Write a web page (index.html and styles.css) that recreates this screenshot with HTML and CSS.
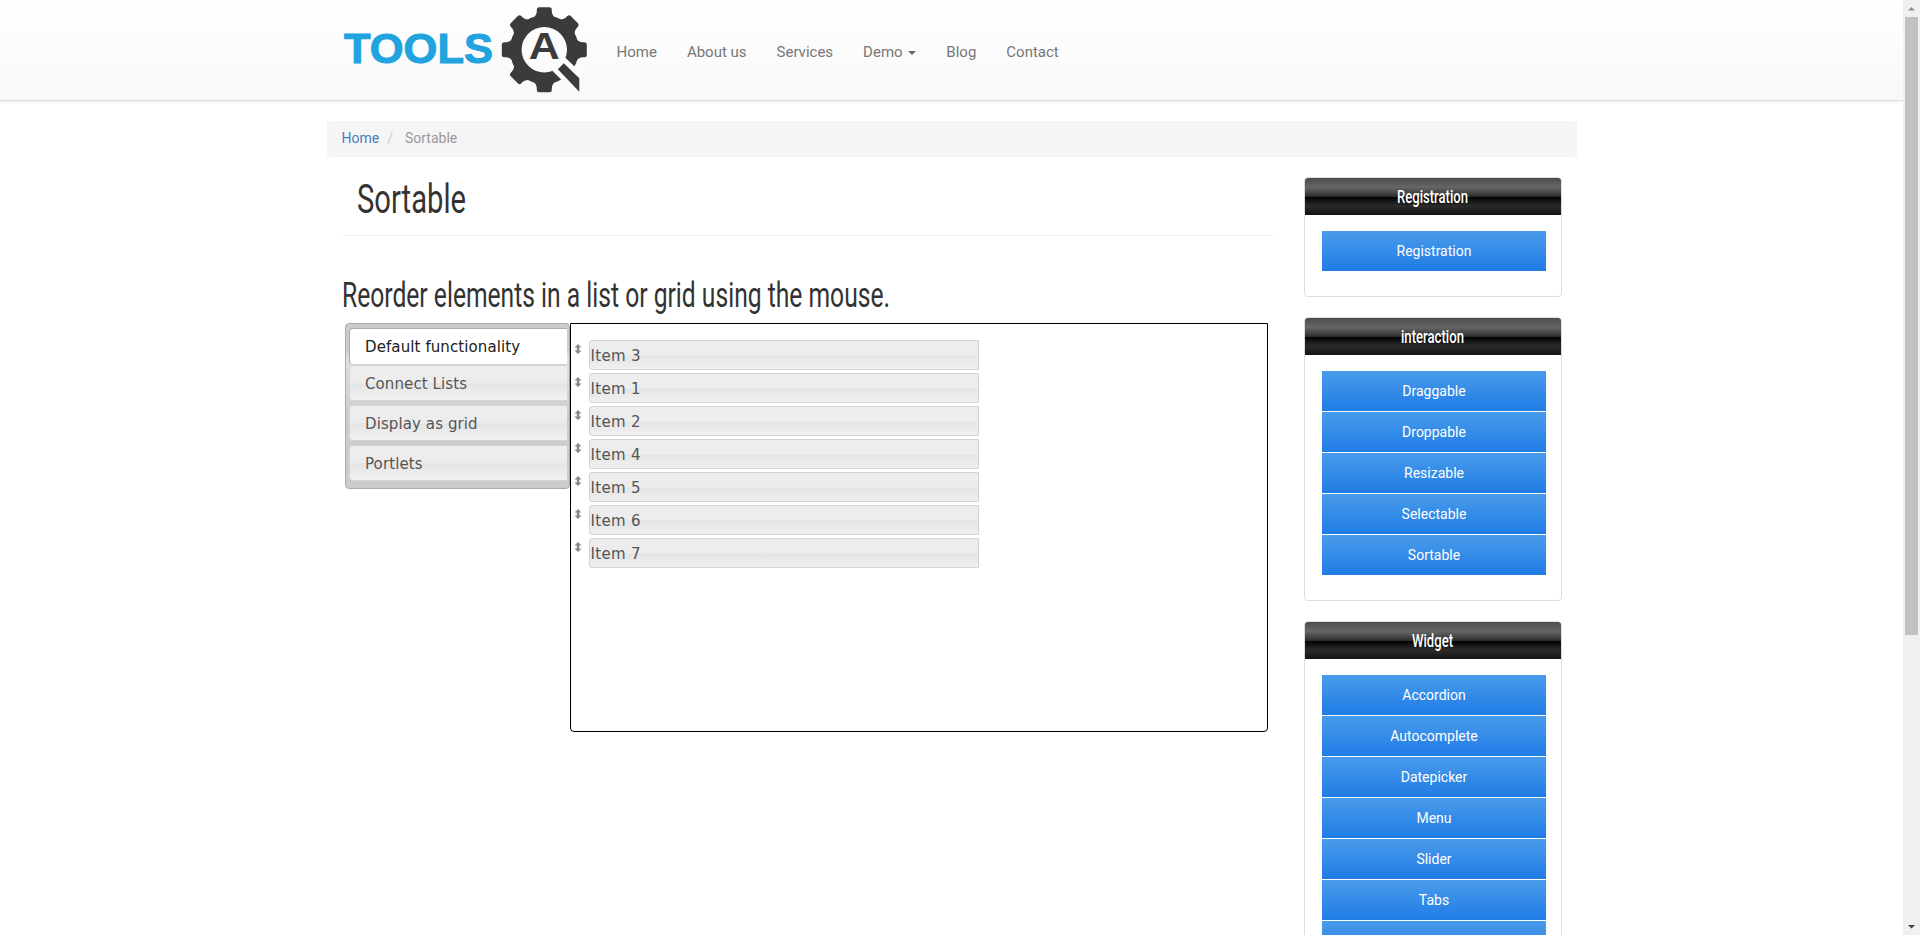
FILE: index.html
```
<!DOCTYPE html>
<html lang="en">
<head>
<meta charset="utf-8">
<title>Sortable</title>
<link rel="stylesheet" href="styles.css">
</head>
<body>
<div class="page">
  <header class="navbar">
    <div class="container nav-row">
      <svg class="logo" width="250" height="100" viewBox="0 0 250 100">
        <text class="logo-text" x="7" y="63" textLength="149" lengthAdjust="spacingAndGlyphs">TOOLS</text>
        <g transform="translate(207.3 49.7)">
          <g class="gear">
            <circle r="34.5"/>
            <path id="tooth" d="M-13-31Q-8-33-7.500-38V-40Q-7.500-42.500-5-42.500H5Q7.500-42.500 7.500-40V-38Q8-33 13-31Z"/>
            <use href="#tooth" transform="rotate(45)"/>
            <use href="#tooth" transform="rotate(90)"/>
            <use href="#tooth" transform="rotate(180)"/>
            <use href="#tooth" transform="rotate(225)"/>
            <use href="#tooth" transform="rotate(270)"/>
            <use href="#tooth" transform="rotate(315)"/>
          </g>
          <circle class="hole" r="22.7"/>
          <path class="hole" d="M8 21L21 8L37 23V42H29Z"/>
          <path class="gear" d="M13.500 19.500L19.500 13.500L35 28.500V42Z"/>
          <text class="logo-a" x="-15.500" y="9.500" textLength="31" lengthAdjust="spacingAndGlyphs">A</text>
        </g>
      </svg>
      <nav class="menu">
        <a>Home</a><a>About us</a><a>Services</a><a>Demo <i class="caret"></i></a><a>Blog</a><a>Contact</a>
      </nav>
    </div>
  </header>
  <div class="container breadcrumb"><a class="link">Home</a><span class="slash">/</span><span class="current">Sortable</span></div>
  <div class="container columns">
    <main class="main">
      <h1 class="title"><svg width="140" height="50"><text x="0" y="36" textLength="109" lengthAdjust="spacingAndGlyphs">Sortable</text></svg></h1>
      <h2 class="subtitle"><svg width="600" height="50"><text x="0" y="35" textLength="548" lengthAdjust="spacingAndGlyphs">Reorder elements in a list or grid using the mouse.</text></svg></h2>
      <div class="demo">
        <ul class="tabs">
          <li class="tab active">Default functionality</li>
          <li class="tab">Connect Lists</li>
          <li class="tab">Display as grid</li>
          <li class="tab">Portlets</li>
        </ul>
        <ul class="panel">
          <li class="row"><svg class="arrow" viewBox="0 0 7 10"><path d="M3.500 0L7 3.500H4.700V6.500H7L3.500 10L0 6.500H2.300V3.500H0Z"/></svg><span class="item">Item 3</span></li>
          <li class="row"><svg class="arrow" viewBox="0 0 7 10"><path d="M3.500 0L7 3.500H4.700V6.500H7L3.500 10L0 6.500H2.300V3.500H0Z"/></svg><span class="item">Item 1</span></li>
          <li class="row"><svg class="arrow" viewBox="0 0 7 10"><path d="M3.500 0L7 3.500H4.700V6.500H7L3.500 10L0 6.500H2.300V3.500H0Z"/></svg><span class="item">Item 2</span></li>
          <li class="row"><svg class="arrow" viewBox="0 0 7 10"><path d="M3.500 0L7 3.500H4.700V6.500H7L3.500 10L0 6.500H2.300V3.500H0Z"/></svg><span class="item">Item 4</span></li>
          <li class="row"><svg class="arrow" viewBox="0 0 7 10"><path d="M3.500 0L7 3.500H4.700V6.500H7L3.500 10L0 6.500H2.300V3.500H0Z"/></svg><span class="item">Item 5</span></li>
          <li class="row"><svg class="arrow" viewBox="0 0 7 10"><path d="M3.500 0L7 3.500H4.700V6.500H7L3.500 10L0 6.500H2.300V3.500H0Z"/></svg><span class="item">Item 6</span></li>
          <li class="row"><svg class="arrow" viewBox="0 0 7 10"><path d="M3.500 0L7 3.500H4.700V6.500H7L3.500 10L0 6.500H2.300V3.500H0Z"/></svg><span class="item">Item 7</span></li>
        </ul>
      </div>
    </main>
    <aside class="sidebar">
      <section class="card">
        <h3 class="card-head"><svg width="72" height="37"><text x="0" y="25" textLength="71" lengthAdjust="spacingAndGlyphs">Registration</text></svg></h3>
        <div class="card-body"><a class="btn">Registration</a></div>
      </section>
      <section class="card">
        <h3 class="card-head"><svg width="64" height="37"><text x="0" y="25" textLength="63" lengthAdjust="spacingAndGlyphs">interaction</text></svg></h3>
        <div class="card-body"><a class="btn">Draggable</a><a class="btn">Droppable</a><a class="btn">Resizable</a><a class="btn">Selectable</a><a class="btn">Sortable</a></div>
      </section>
      <section class="card">
        <h3 class="card-head"><svg width="42" height="37"><text x="0" y="25" textLength="41" lengthAdjust="spacingAndGlyphs">Widget</text></svg></h3>
        <div class="card-body"><a class="btn">Accordion</a><a class="btn">Autocomplete</a><a class="btn">Datepicker</a><a class="btn">Menu</a><a class="btn">Slider</a><a class="btn">Tabs</a><a class="btn">Tooltip</a></div>
      </section>
    </aside>
  </div>
</div>
<div class="scrollbar">
  <svg width="17" height="17"><path d="M5 10.500L8.500 7L12 10.500Z" fill="#8b8b8b"/></svg>
  <div class="thumb"></div>
  <svg class="down" width="17" height="17"><path d="M5 7L8.500 10.500L12 7Z" fill="#404040"/></svg>
</div>
</body>
</html>
```
FILE: styles.css
```
* { box-sizing: border-box; }
html, body { height: 100%; }
body {
  margin: 0;
  display: flex;
  overflow: hidden;
  background: #fff;
  color: #333;
  font: 14px/20px Roboto, sans-serif;
}
ul, h1, h2, h3 { margin: 0; padding: 0; list-style: none; font-weight: 400; }
svg { display: block; overflow: visible; }
.page { width: 1903px; height: 935px; overflow: hidden; }
.container { width: 1250px; margin: 0 auto; }

.navbar {
  height: 101px;
  background: linear-gradient(#fff, #f8f8f8);
  border-bottom: 1px solid #dfdfdf;
  box-shadow: 0 1px 3px rgba(0, 0, 0, .09);
}
.nav-row { display: flex; padding-left: 10px; }
.logo { flex: none; }
.logo-text { font: 700 42px "Liberation Sans", sans-serif; fill: #20a3df; stroke: #20a3df; stroke-width: 1px; }
.logo-a { font: 700 37px "Liberation Sans", sans-serif; fill: #3b3b3b; }
.gear { fill: #3b3b3b; }
.hole { fill: #fcfcfc; }
.menu { display: flex; gap: 30px; padding: 42px 0 0 30px; font-size: 15px; color: #777; white-space: pre; }
.caret { display: inline-block; border: 4px solid transparent; border-top-color: #666; border-bottom: 0; margin-left: 2px; vertical-align: middle; }

.breadcrumb {
  display: flex;
  height: 36px;
  margin-top: 20px;
  padding: 7px 15px;
  background: #f5f5f5;
  border-radius: 2px;
}
.link { color: #4580c0; }
.slash { color: #ccc; padding: 0 12px 0 8px; }
.current { color: #999; }

.columns { display: flex; padding: 20px 15px 0; }
.main { width: 932px; }
.title { height: 59px; padding-left: 15px; border-bottom: 1px solid #eee; }
.title text { font: 41px Roboto, sans-serif; fill: #333; }
.subtitle { height: 51px; margin-top: 36px; }
.subtitle text { font: 35px Roboto, sans-serif; fill: #333; }
.demo { display: flex; align-items: flex-start; font: 15px/20px "DejaVu Sans", sans-serif; letter-spacing: .1px; padding-left: 3px; }

.tabs {
  width: 225px;
  height: 166px;
  padding: 4px 2px 0 3px;
  border: 1px solid #aaa;
  border-radius: 4px;
  background: linear-gradient(#ccc 0 17%, #e0e0e0 20%, #ccc 60%);
}
.tab {
  height: 36px;
  margin-bottom: 4px;
  padding: 8px 0 0 15.5px;
  border: 1px solid #d3d3d3;
  border-right: 0;
  border-radius: 4px 0 0 4px;
  background: linear-gradient(#ededed 0 50%, #e5e5e5 52%, #f1f1f1);
  color: #555;
}
.tab.active { height: 37px; margin-bottom: 0; background: #fff; border-color: #aaa #aaa #d3d3d3; color: #212121; }
.panel { width: 698px; height: 409px; padding: 16px 4px 16px 3px; border: 1px solid #000; border-radius: 0 0 4px 4px; }
.row { display: flex; gap: 7px; margin-bottom: 3px; }
.arrow { width: 8px; height: 10px; margin-top: 4px; fill: #888; }
.item {
  width: 390px;
  height: 30px;
  padding: 5px 0 0 1px;
  border: 1px solid #d3d3d3;
  border-radius: 3px 0 0 3px;
  background: linear-gradient(#ededed 0 50%, #e5e5e5 54%, #f0f0f0);
  color: #555;
  letter-spacing: .3px;
}

.sidebar { width: 258px; margin-left: 30px; }
.card { margin-bottom: 20px; border: 1px solid #ddd; border-radius: 4px; overflow: hidden; }
.card-head {
  display: flex;
  justify-content: center;
  height: 37px;
  background: linear-gradient(#4c4c4c, #595959 12%, #666 25%, #474747 39%, #2c2c2c 50%, #000 51%, #111 60%, #2b2b2b 76%, #1c1c1c 91%, #131313);
}
.card-head text { font: 500 19px Roboto, sans-serif; fill: #fff; }
.card-body { padding: 16px 15px 24px 17px; }
.btn {
  display: block;
  height: 41px;
  padding: 10px 0 0 1px;
  border-bottom: 1px solid #fff;
  background: linear-gradient(#499bea, #207ce5) padding-box;
  color: #fff;
  text-align: center;
}

.scrollbar { display: flex; flex-direction: column; width: 17px; height: 935px; background: #f0f0f0; }
.thumb { width: 13px; height: 618px; margin-left: 2px; background: #c1c1c1; }
.down { margin-top: auto; }
```
